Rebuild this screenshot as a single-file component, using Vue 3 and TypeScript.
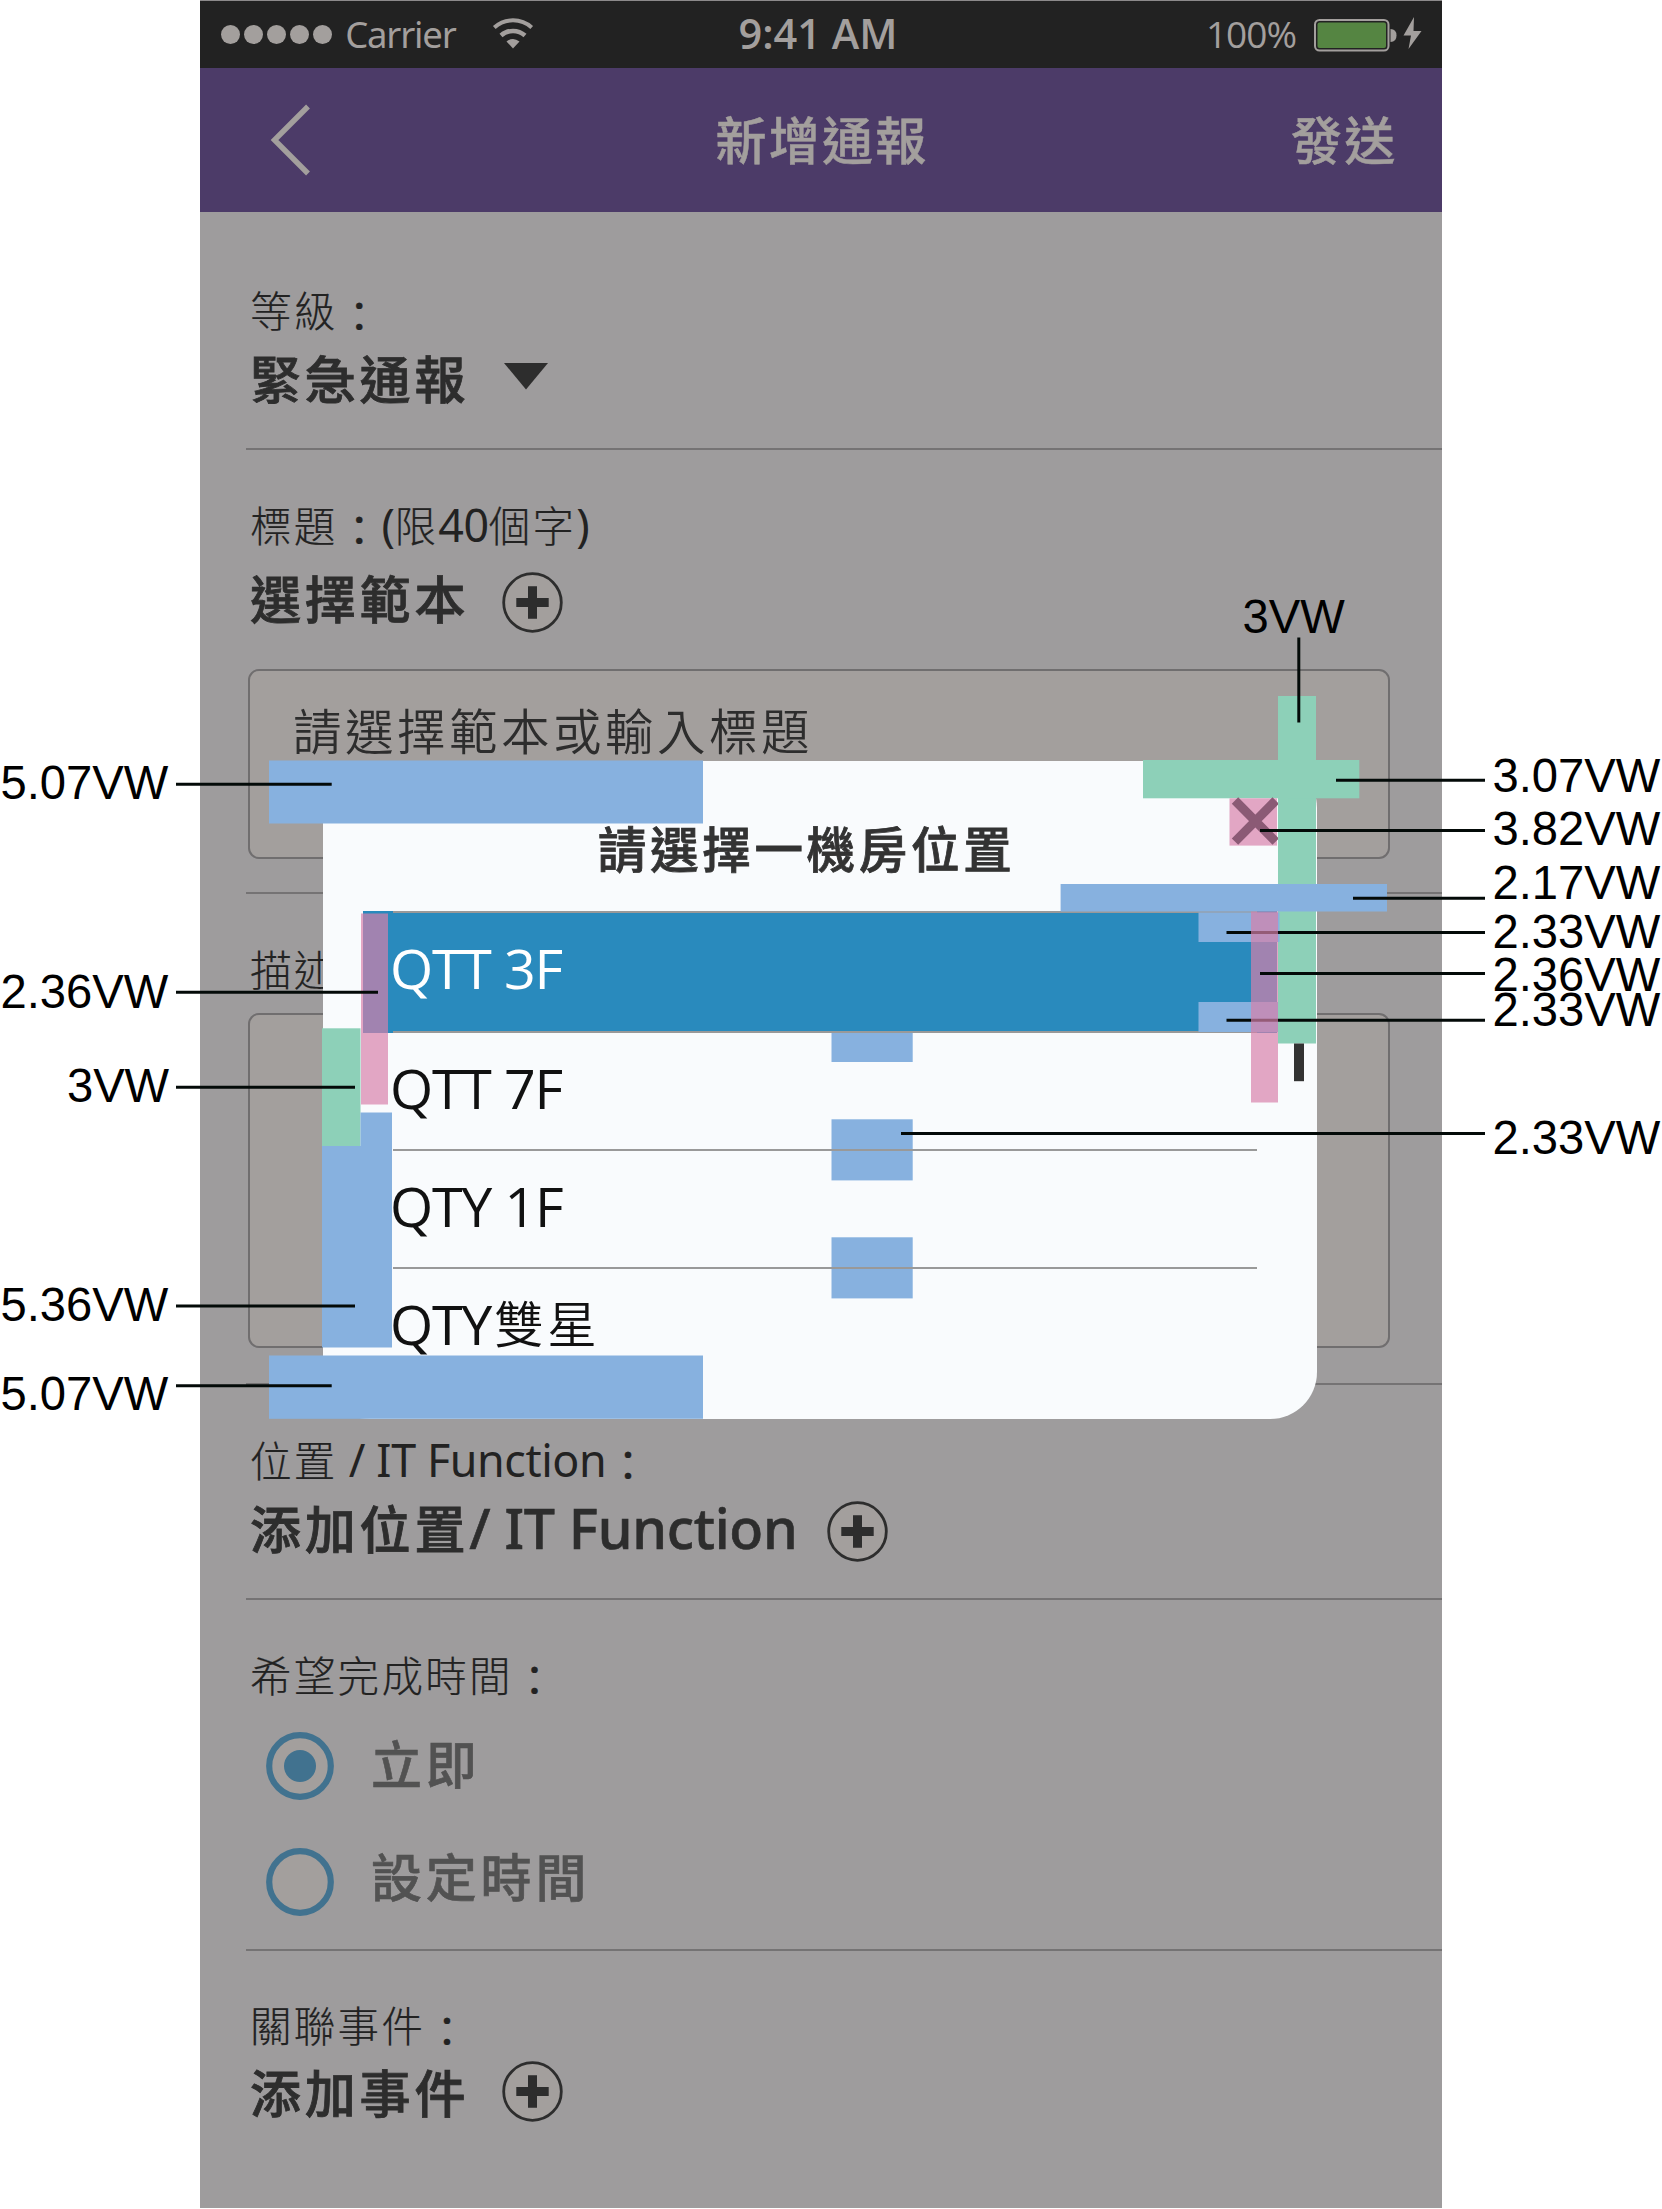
<script setup lang="ts">
interface Rect { x: number; y: number; w: number; h: number }
interface Callout { text: string; tx: number; ty: number; x1: number; x2: number; y: number }
interface Room { code: string; name?: string }

const rooms: Room[] = [{ code: 'QTT 3F' }, { code: 'QTT 7F' }, { code: 'QTY 1F' }, { code: 'QTY', name: '雙星' }]

const blueBars: Rect[] = [
  { x: 269, y: 760.5, w: 434, h: 63 },
  { x: 1060.6, y: 884, w: 326.4, h: 27.5 },
  { x: 1198.5, y: 912.5, w: 81, h: 29.5 },
  { x: 1198.5, y: 1002, w: 79.5, h: 30 },
  { x: 360.5, y: 1112.5, w: 31.5, h: 40 },
  { x: 322, y: 1146, w: 70, h: 201.5 },
  { x: 269, y: 1355.5, w: 434, h: 63.3 },
]
const gapBars: Rect[] = [
  { x: 831.5, y: 1033, w: 81.2, h: 29 },
  { x: 831.5, y: 1119.3, w: 81.2, h: 29.7 },
  { x: 831.5, y: 1151, w: 81.2, h: 29.4 },
  { x: 831.5, y: 1237.3, w: 81.2, h: 29.7 },
  { x: 831.5, y: 1269, w: 81.2, h: 29.4 },
]
const greenBars: Rect[] = [
  { x: 1278, y: 696, w: 38, h: 347.5 },
  { x: 1143, y: 760, w: 216.3, h: 38.3 },
  { x: 322, y: 1028.3, w: 38.5, h: 118 },
]
const pinkBars: Rect[] = [
  { x: 1251, y: 911.5, w: 27, h: 191 },
  { x: 361, y: 913.5, w: 27, h: 191 },
]
const callouts: Callout[] = [
  { text: '3.07VW', tx: 1492.5, ty: 791.7, x1: 1336, x2: 1485, y: 780.3 },
  { text: '3.82VW', tx: 1492.5, ty: 845.2, x1: 1260, x2: 1485, y: 830.5 },
  { text: '2.17VW', tx: 1492.5, ty: 898.8, x1: 1353, x2: 1485, y: 898.2 },
  { text: '2.33VW', tx: 1492.5, ty: 947.8, x1: 1226.5, x2: 1485, y: 932.5 },
  { text: '2.36VW', tx: 1492.5, ty: 990.8, x1: 1260, x2: 1485, y: 973.5 },
  { text: '2.33VW', tx: 1492.5, ty: 1026, x1: 1226.5, x2: 1485, y: 1020.2 },
  { text: '2.33VW', tx: 1492.5, ty: 1154, x1: 901, x2: 1485, y: 1133.5 },
  { text: '5.07VW', tx: 0.5, ty: 799.3, x1: 176, x2: 331.7, y: 784.2 },
  { text: '2.36VW', tx: 0.5, ty: 1008, x1: 176, x2: 378, y: 992.3 },
  { text: '3VW', tx: 66.9, ty: 1102.2, x1: 176, x2: 355, y: 1087.3 },
  { text: '5.36VW', tx: 0.5, ty: 1320.5, x1: 176, x2: 355, y: 1306 },
  { text: '5.07VW', tx: 0.5, ty: 1409.7, x1: 176, x2: 331.7, y: 1385.7 },
]
const behindPink = (c: Callout) => c.x1 === 1226.5
</script>

<template>
  <div class="board">
    <div class="phone">
      <div class="status">
        <div class="side">
          <div class="dots"><i v-for="n in 5" :key="n"></i></div>
          <span class="carrier">Carrier</span>
          <svg class="wifi" width="42" height="32" viewBox="0 0 42 32">
            <path d="M2.3 10.5A28 28 0 0 1 39.700 10.5" fill="none" stroke="#a39f9d" stroke-width="4" />
            <path d="M9 18.500A18 18 0 0 1 33 18.500" fill="none" stroke="#a39f9d" stroke-width="4.500" />
            <path d="M14.500 24.500Q21 19.500 27.500 24.500L21 31.500Z" fill="#a39f9d" />
          </svg>
        </div>
        <span class="clock">9:41 AM</span>
        <div class="side right">
          <span class="percent">100%</span>
          <svg class="battery" width="110" height="36" viewBox="0 0 110 36">
            <rect x="1" y="3" width="73.500" height="30.500" rx="4.500" fill="#222" stroke="#a39f9d" stroke-width="2" />
            <rect x="3.500" y="5.500" width="68.500" height="25.500" rx="2" fill="#558542" />
            <path d="M76.500 12Q82.500 12 82.500 18.500T76.500 25Z" fill="#a39f9d" />
            <path d="M100 0L89.500 18.500H97L94.500 32L107.500 14H99.500Z" fill="#a39f9d" />
          </svg>
        </div>
      </div>

      <header class="nav">
        <svg class="back" width="42" height="74" viewBox="0 0 42 74">
          <path d="M38 3.500L4.500 37L38 70.500" fill="none" stroke="#a39f9d" stroke-width="5.400" />
        </svg>
        <h1>新增通報</h1>
        <span class="send">發送</span>
      </header>

      <section class="s1">
        <div class="label">等級<span class="colon">：</span></div>
        <div class="value">
          <span>緊急通報</span>
          <svg class="caret" width="44" height="27" viewBox="0 0 44 27"><path d="M0 0H44L22 26.500Z" fill="#2d2d2d" /></svg>
        </div>
      </section>

      <section class="s2">
        <div class="label">標題<span class="colon">：</span><span class="lat">(</span>限<span class="lat">40</span>個字<span class="lat">)</span></div>
        <div class="value">
          <span>選擇範本</span>
          <svg class="plus" width="61" height="61" viewBox="0 0 61 61">
            <circle cx="30.500" cy="30.500" r="28.800" fill="#a39f9d" stroke="#2d2d2d" stroke-width="2.800" />
            <path d="M30.500 14.300V46.700M14.300 30.500H46.700" stroke="#2d2d2d" stroke-width="9" />
          </svg>
        </div>
        <div class="box">請選擇範本或輸入標題</div>
      </section>

      <section class="s3">
        <div class="label">描述<span class="colon">：</span></div>
        <div class="box"></div>
      </section>

      <section class="s4">
        <div class="label">位置<span class="lat"> / IT Function</span><span class="colon">：</span></div>
        <div class="value">
          <span class="it-value">添加位置<span class="lat">/ IT Function</span></span>
          <svg class="plus" width="61" height="61" viewBox="0 0 61 61">
            <circle cx="30.500" cy="30.500" r="28.800" fill="#a39f9d" stroke="#2d2d2d" stroke-width="2.800" />
            <path d="M30.500 14.300V46.700M14.300 30.500H46.700" stroke="#2d2d2d" stroke-width="9" />
          </svg>
        </div>
      </section>

      <section class="s5">
        <div class="label">希望完成時間<span class="colon">：</span></div>
        <div class="option">
          <svg width="68" height="68" viewBox="0 0 68 68">
            <circle cx="34" cy="34" r="30.800" fill="#a39f9d" stroke="#41728f" stroke-width="6.200" />
            <circle cx="34" cy="34" r="16" fill="#41728f" />
          </svg>
          <span>立即</span>
        </div>
        <div class="option second">
          <svg width="68" height="68" viewBox="0 0 68 68">
            <circle cx="34" cy="34" r="30.800" fill="#a39f9d" stroke="#41728f" stroke-width="6.200" />
          </svg>
          <span>設定時間</span>
        </div>
      </section>

      <section class="s6">
        <div class="label">關聯事件<span class="colon">：</span></div>
        <div class="value">
          <span>添加事件</span>
          <svg class="plus" width="61" height="61" viewBox="0 0 61 61">
            <circle cx="30.500" cy="30.500" r="28.800" fill="#a39f9d" stroke="#2d2d2d" stroke-width="2.800" />
            <path d="M30.500 14.300V46.700M14.300 30.500H46.700" stroke="#2d2d2d" stroke-width="9" />
          </svg>
        </div>
      </section>
    </div>

    <div class="modal">
      <h2>請選擇一機房位置</h2>
      <ul>
        <li v-for="(room, i) in rooms" :key="i" :class="{ active: i === 0 }">
          <span class="code">{{ room.code }}</span><span v-if="room.name" class="name">{{ room.name }}</span>
        </li>
      </ul>
    </div>

    <!-- spacing measurements laid over the screen -->
    <svg class="spec" width="1662" height="2209" viewBox="0 0 1662 2209">
      <g fill="#8dd0b8"><rect v-for="(r, i) in greenBars" :key="i" :x="r.x" :y="r.y" :width="r.w" :height="r.h" /></g>
      <g fill="#87b1df">
        <rect v-for="(r, i) in blueBars" :key="i" :x="r.x" :y="r.y" :width="r.w" :height="r.h" />
        <rect v-for="(r, i) in gapBars" :key="'g' + i" :x="r.x" :y="r.y" :width="r.w" :height="r.h" />
      </g>
      <rect x="1294" y="1043.500" width="10" height="37.700" fill="#333" />
      <rect x="1229.500" y="798.300" width="47.500" height="47.300" fill="#e2a6c4" />
      <path d="M1235 800.500L1275.700 841.700M1275.700 800.500L1235 841.700" stroke="#8b5a75" stroke-width="9" />
      <rect x="1278" y="796" width="10" height="52" fill="#8dd0b8" />
      <g stroke="#030a08" stroke-width="3">
        <line v-for="(c, i) in callouts.filter(behindPink)" :key="i" :x1="c.x1" :x2="c.x2" :y1="c.y" :y2="c.y" />
      </g>
      <g fill="#d880aa" fill-opacity=".69"><rect v-for="(r, i) in pinkBars" :key="i" :x="r.x" :y="r.y" :width="r.w" :height="r.h" /></g>
      <g stroke="#030a08" stroke-width="3">
        <line v-for="(c, i) in callouts.filter(c => !behindPink(c))" :key="i" :x1="c.x1" :x2="c.x2" :y1="c.y" :y2="c.y" />
        <line x1="1298.800" x2="1298.800" y1="637.500" y2="722.500" />
      </g>
      <g class="dims">
        <text v-for="(c, i) in callouts" :key="i" :x="c.tx" :y="c.ty">{{ c.text }}</text>
        <text x="1242.500" y="633">3VW</text>
      </g>
    </svg>
  </div>
</template>

<style>
body { margin: 0; background: #fff; }
</style>

<style scoped>
.board {
  position: relative;
  width: 1662px;
  height: 2209px;
  overflow: hidden;
  background: #fff;
  font-family: "Open Sans", "Noto Sans CJK TC", sans-serif;
}
.phone {
  box-sizing: border-box;
  width: 1242px;
  height: 2208px;
  margin-left: 199.5px;
  border-top: 1px solid #8c8a8b;
  background: #9e9c9d;
}
.status {
  display: grid;
  grid-template-columns: 1fr auto 1fr;
  align-items: center;
  height: 67px;
  background: #222;
  color: #a39f9d;
  white-space: nowrap;
}
.side { display: flex; align-items: center; padding-left: 21.5px; }
.side.right { justify-content: flex-end; padding: 0 17.500px 0 0; }
.dots { display: flex; gap: 4.2px; }
.dots i { width: 18.900px; height: 18.900px; border-radius: 50%; background: #a39f9d; }
.carrier { margin: -2px 0 0 13px; width: 112px; font: 36.500px/60px "Noto Sans", sans-serif; letter-spacing: -1.2px; }
.wifi { margin: -3px 0 0 34.500px; }
.clock { margin: -3px 5px 0 0; font: 600 41.500px/60px "Open Sans", sans-serif; }
.percent { margin: -1px 18px 0 0; font: 37px/60px "Open Sans", sans-serif; letter-spacing: -1px; }
.nav {
  display: grid;
  grid-template-columns: 1fr auto 1fr;
  align-items: center;
  height: 144px;
  background: #4c3b68;
  color: #a39f9d;
}
.back { margin-left: 70px; margin-top: -1px; }
.nav h1, .send {
  margin: 0;
  font-size: 51px;
  line-height: 60px;
  font-weight: 500;
  letter-spacing: 2.3px;
  -webkit-text-stroke: .5px currentColor;
}
.nav h1 { padding-left: 3px; }
.send { justify-self: end; margin-right: 44px; }
section {
  box-sizing: border-box;
  margin-left: 46.5px;
  padding-left: 4px;
  border-bottom: 2px solid #757374;
}
.label {
  height: 50px;
  color: #222;
  font-size: 41.500px;
  font-weight: 300;
  line-height: 50px;
  letter-spacing: 2.3px;
  white-space: pre;
  -webkit-text-stroke: .2px currentColor;
}
.colon { position: relative; top: 4.500px; left: 1px; font-weight: 400; }
.value {
  display: flex;
  align-items: center;
  height: 60px;
  color: #2d2d2d;
  font-size: 51px;
  font-weight: 500;
  line-height: 60px;
  letter-spacing: 3.800px;
  white-space: nowrap;
  -webkit-text-stroke: .8px currentColor;
}
.plus { margin-left: 33px; flex: none; }
.caret { margin: -5px 0 0 35px; }
.s1 { height: 238px; padding-top: 74px; }
.s1 .value { margin-top: 13px; }
.s2 { height: 444px; padding-top: 50.500px; }
.s2 .value { margin-top: 21.500px; }
.s2 .value span { margin-top: -6px; }
.s2 .box { margin-top: 37px; height: 190px; }
.s3 { height: 491px; padding-top: 50.500px; }
.s3 .box { margin-top: 18.500px; height: 334.500px; }
.s4 { height: 215px; padding-top: 50.500px; }
.s4 .value { margin-top: 15.500px; }
.s4 .value > span { margin-top: -4px; }
.s4 .plus { margin-left: 30px; }
.s5 { height: 351px; padding-top: 50.500px; }
.s6 { height: 257px; padding-top: 50px; border-bottom: 0; }
.s6 .value { margin-top: 12px; }
.s6 .value .plus { margin-top: -4px; }
.lat {
  font-family: "Noto Sans", sans-serif;
  font-size: 44.800px;
  font-weight: 400;
  line-height: 1;
  letter-spacing: -.4px;
  -webkit-text-stroke: 0;
}
.it-value .lat { font-size: 55.500px; font-weight: 500; letter-spacing: -.300px; -webkit-text-stroke: .6px currentColor; }
.box {
  box-sizing: border-box;
  width: 1142px;
  margin-left: -2px;
  padding: 30px 0 0 43px;
  border: 2px solid #706e6f;
  border-radius: 11px;
  background: #a39f9d;
  color: #2d2d2d;
  font-size: 48.500px;
  font-weight: 350;
  line-height: 60px;
  letter-spacing: 3.500px;
}
.option {
  display: flex;
  align-items: center;
  gap: 37px;
  height: 68px;
  margin: 31.500px 0 0 16px;
  color: #525252;
  font-size: 51px;
  font-weight: 500;
  letter-spacing: 3.800px;
  line-height: 60px;
  -webkit-text-stroke: .6px currentColor;
}
.option span { margin-top: -4px; }
.option.second { margin-top: 47.500px; }
.option.second span { margin-top: -9px; }
.modal {
  position: absolute;
  left: 323.300px;
  top: 760.500px;
  box-sizing: border-box;
  width: 993.700px;
  height: 658.500px;
  padding-top: 58.500px;
  border-radius: 47px;
  background: #f9fbfd;
}
.modal h2 {
  margin: 0 0 32px;
  padding-left: 274.500px;
  color: #333;
  font-size: 48.500px;
  font-weight: 500;
  line-height: 60px;
  letter-spacing: 3.700px;
  -webkit-text-stroke: .8px currentColor;
}
.modal ul { margin: 0; padding: 0; list-style: none; }
.modal li {
  box-sizing: border-box;
  height: 118px;
  margin: 0 60px 0 69.500px;
  border-bottom: 2px solid #999;
  color: #111;
  line-height: 109px;
  white-space: nowrap;
}
.modal li:last-child { border-bottom: 0; }
.code { margin-left: -2.800px; font-size: 55.500px; letter-spacing: -1.200px; }
.name { position: relative; top: -2px; margin-left: 3px; font-size: 49.500px; font-weight: 350; letter-spacing: 3.500px; }
.modal li.active {
  height: 122px;
  border-top: 2px solid #999;
  background: #298abd;
  box-shadow: -30px 0 0 #298abd, 20px 0 0 #298abd;
  color: #fff;
}
.spec { position: absolute; left: 0; top: 0; }
.dims { font: 47.200px "Liberation Sans", Arial, sans-serif; fill: #000; }
</style>
